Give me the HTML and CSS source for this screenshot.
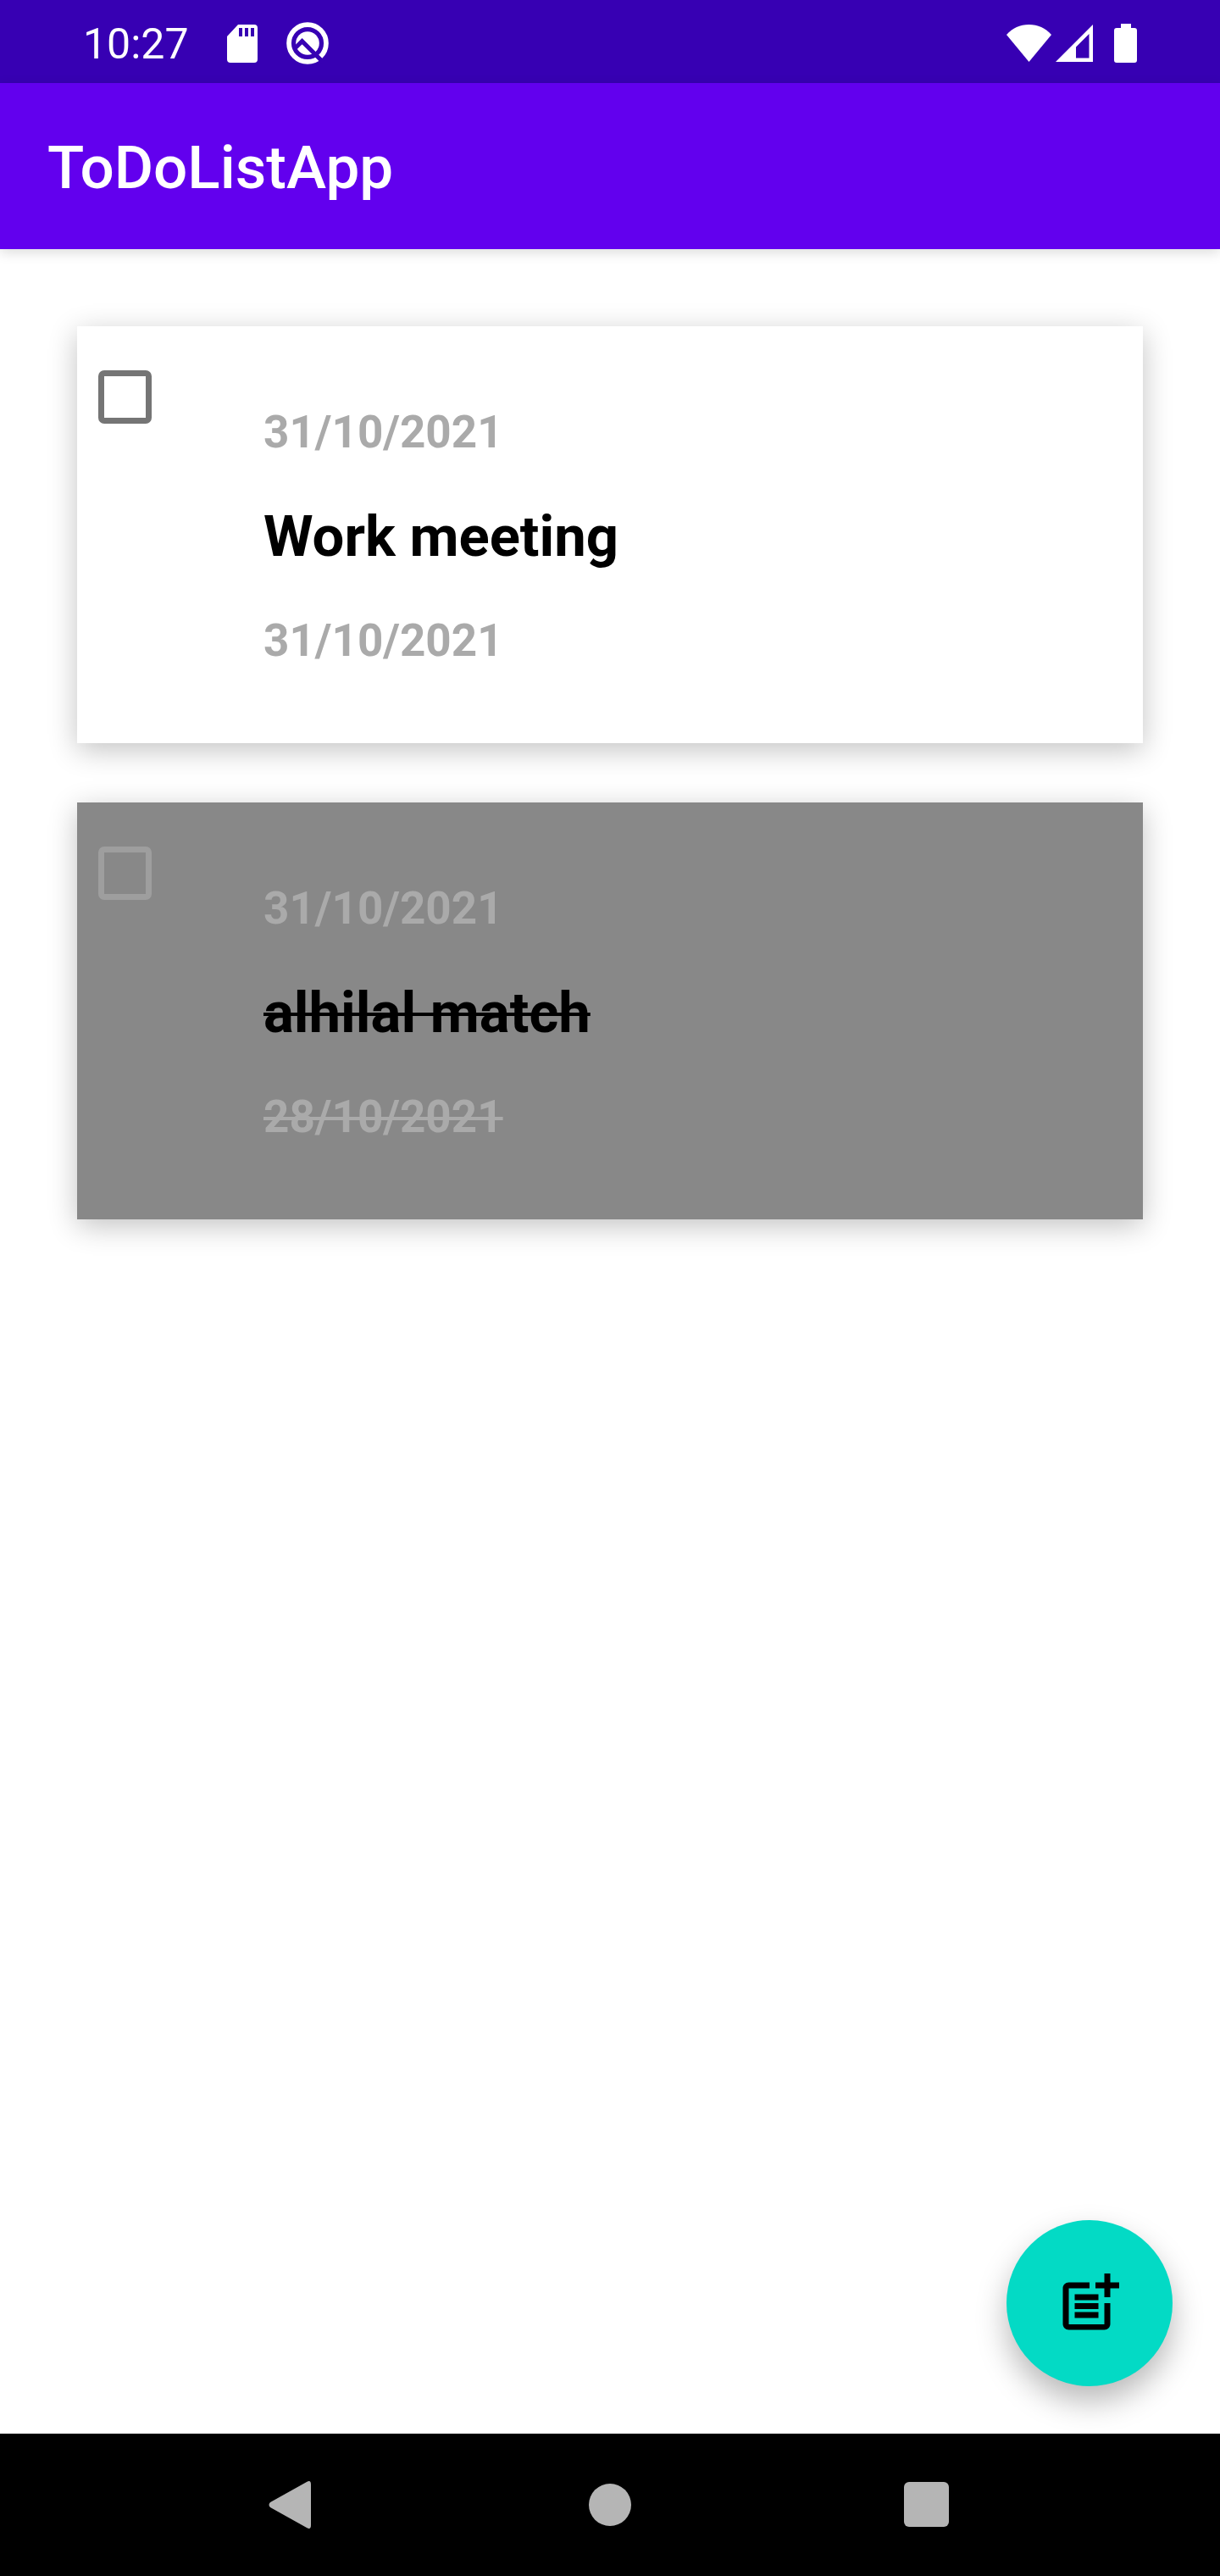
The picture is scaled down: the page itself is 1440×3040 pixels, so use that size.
FILE: index.html
```html
<!DOCTYPE html>
<html lang="en">
<head>
<meta charset="utf-8">
<meta name="viewport" content="width=device-width, initial-scale=1">
<title>ToDoListApp</title>
<link rel="stylesheet" href="styles.css">
</head>
<body>
<div class="status-bar">
  <span class="clock">10:27</span>
  <svg class="icon-sd" viewBox="0 0 36 45" aria-hidden="true"><path fill="currentColor" fill-rule="evenodd" d="M13 0h19a4 4 0 0 1 4 4v37a4 4 0 0 1-4 4H4a4 4 0 0 1-4-4V14zM14 4v10h4V4zM21 4v10h4V4zM28 4v10h4V4z"/></svg>
  <svg class="icon-q" viewBox="0 0 160 160" aria-hidden="true">
    <circle cx="80" cy="80" r="65" fill="none" stroke="currentColor" stroke-width="17"/>
    <circle cx="80" cy="80" r="41" fill="currentColor"/>
    <path class="q-cut" d="M36 98L61 73L134 146" />
  </svg>
  <div class="status-end">
    <svg class="icon-wifi" viewBox="0 0 53 44" aria-hidden="true"><path fill="currentColor" d="M26.500 44L0 12C7 4 16 0 26.500 0S46 4 53 12z"/></svg>
    <svg class="icon-signal" viewBox="0 0 44 44" aria-hidden="true"><path fill="currentColor" fill-rule="evenodd" d="M44 0v44H0zM39.500 11L24 26.500V39.500H39.500z"/></svg>
    <svg class="icon-battery" viewBox="0 0 27 46" aria-hidden="true"><path fill="currentColor" d="M8 0h12v5h4a3 3 0 0 1 3 3v35a3 3 0 0 1-3 3H3a3 3 0 0 1-3-3V8a3 3 0 0 1 3-3h5z"/></svg>
  </div>
</div>
<header class="app-bar"><h1 class="app-title">ToDoListApp</h1></header>
<main class="content">
  <ul class="task-list">
    <li class="task">
      <input class="task-check" type="checkbox" id="task-1">
      <div class="task-body">
        <time class="task-date">31/10/2021</time>
        <label class="task-title" for="task-1">Work meeting</label>
        <time class="task-date">31/10/2021</time>
      </div>
    </li>
    <li class="task task-past">
      <input class="task-check" type="checkbox" id="task-2" disabled>
      <div class="task-body">
        <time class="task-date">31/10/2021</time>
        <label class="task-title struck" for="task-2">alhilal match</label>
        <time class="task-date struck">28/10/2021</time>
      </div>
    </li>
  </ul>
  <button class="fab" type="button" aria-label="Add task">
    <svg class="fab-icon" viewBox="0 0 24 24" aria-hidden="true"><path fill="currentColor" d="M17 19.150H5V7h7V5H5c-1.100 0-2 .9-2 2v12c0 1.100.9 2 2 2h12c1.100 0 2-.9 2-2v-7h-2zM19 2h-2v3h-3v2h3v3h2V7h3V5h-3zM7 9h8v2H7zM7 12h8v2H7zM7 15h8v2H7z"/></svg>
  </button>
</main>
<nav class="nav-bar">
  <button class="nav-button" type="button" aria-label="Back"><svg class="nav-icon" viewBox="0 0 60 60" aria-hidden="true"><path fill="currentColor" d="M3 27L46 3Q51 0 51 6V54Q51 60 46 57L3 33Q0 30 3 27z"/></svg></button>
  <button class="nav-button" type="button" aria-label="Home"><svg class="nav-icon" viewBox="0 0 60 60" aria-hidden="true"><circle fill="currentColor" cx="30" cy="30" r="25"/></svg></button>
  <button class="nav-button" type="button" aria-label="Overview"><svg class="nav-icon" viewBox="0 0 60 60" aria-hidden="true"><rect fill="currentColor" x="3" y="3" width="53" height="53" rx="6"/></svg></button>
</nav>
</body>
</html>
```

FILE: styles.css
```css
* { box-sizing: border-box; }

body {
  margin: 0;
  min-height: 100vh;
  display: flex;
  flex-direction: column;
  background: #fff;
  font-family: Roboto, "Noto Sans", sans-serif;
}

svg { display: block; flex: none; }

.status-bar {
  display: flex;
  align-items: center;
  height: 98px;
  padding: 4px 98px 0;
  background: #3700b3;
  color: #fff;
}

.clock { padding-top: 2px; font-size: 50px; line-height: 56px; }
.icon-sd { width: 36px; height: 45px; margin-left: 45px; }
.icon-q { width: 54px; height: 54px; margin-left: 32px; }
.q-cut { fill: none; stroke: #3700b3; stroke-width: 15; }

.status-end {
  display: flex;
  align-items: center;
  margin-left: auto;
}

.icon-wifi { width: 53px; height: 44px; }
.icon-signal { width: 44px; height: 44px; margin-left: 5px; }
.icon-battery { width: 27px; height: 46px; margin-left: 25px; }

.app-bar {
  display: flex;
  align-items: center;
  height: 196px;
  padding: 4px 56px 0;
  background: #6200ee;
  color: #fff;
  box-shadow: 0 4px 14px rgba(0, 0, 0, 0.14);
}

.app-title {
  margin: 0;
  font-size: 71px;
  font-weight: 500;
  line-height: 82px;
}

.content {
  position: relative;
  flex: 1;
  padding: 91px;
}

.task-list {
  display: flex;
  flex-direction: column;
  gap: 70px;
  margin: 0;
  padding: 0;
  list-style: none;
}

.task {
  display: flex;
  align-items: flex-start;
  gap: 132px;
  padding: 52px 25px 90px;
  background: #fff;
  box-shadow: 0 8px 32px rgba(0, 0, 0, 0.24);
}

.task-past { background: #888; }

.task-check {
  appearance: none;
  flex: none;
  width: 63px;
  height: 63px;
  margin: 0;
  border: 7px solid #757575;
  border-radius: 7px;
}

.task-past .task-check { border-color: #9e9e9e; }

.task-body {
  display: flex;
  flex-direction: column;
  align-items: flex-start;
  gap: 53px;
  padding-top: 42px;
}

.task-date {
  color: #aaa;
  font-size: 53px;
  font-weight: 700;
  line-height: 62px;
}

.task-title {
  color: #000;
  font-size: 67px;
  font-weight: 700;
  line-height: 78px;
}

.struck {
  text-decoration: line-through;
  text-decoration-thickness: 4px;
}

.fab {
  position: absolute;
  right: 56px;
  bottom: 56px;
  display: grid;
  place-items: center;
  width: 196px;
  height: 196px;
  padding: 0;
  border: 0;
  border-radius: 50%;
  background: #03dac5;
  color: #000;
  box-shadow: 0 18px 36px rgba(0, 0, 0, 0.28);
}

.fab-icon { width: 84px; height: 84px; }

.nav-bar {
  display: grid;
  grid-template-columns: repeat(3, 1fr);
  height: 168px;
  padding: 0 11%;
  background: #000;
}

.nav-button {
  display: grid;
  place-items: center;
  padding: 0;
  border: 0;
  background: none;
  color: #b5b5b5;
}

.nav-icon { width: 60px; height: 60px; }
```
